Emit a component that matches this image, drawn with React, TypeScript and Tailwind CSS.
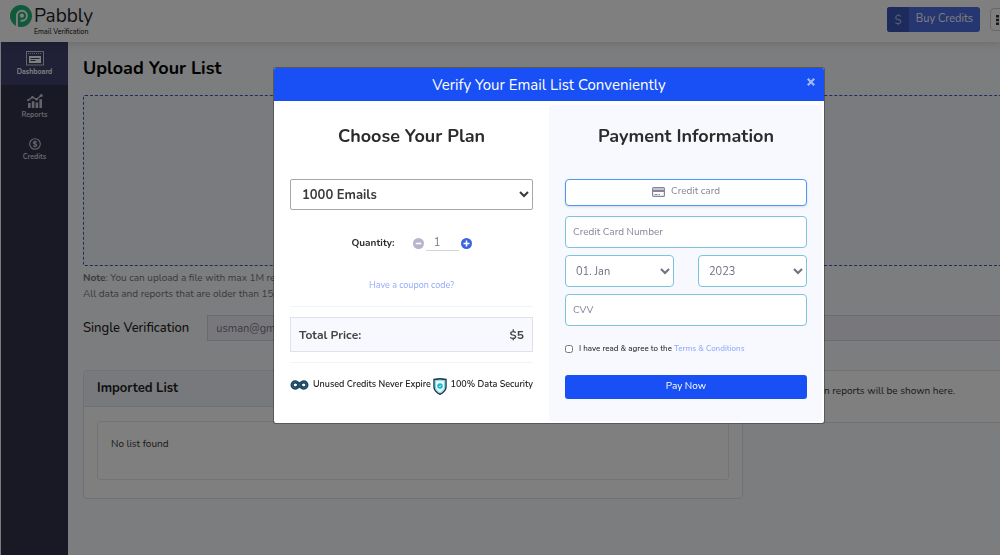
import { ReactNode, useState } from "react";

function PabblyMark() {
  return (
    <svg viewBox="0 0 22 22" className="size-[22px] shrink-0" aria-hidden="true">
      <circle cx="11" cy="11" r="11" fill="#20b276" />
      <path d="M6.900 22V10.700a5 5 0 1 1 5 5h-1.300" fill="none" stroke="#fff" strokeWidth="1.900" />
      <circle cx="11.900" cy="10.700" r="2.100" fill="#fff" />
    </svg>
  );
}

function DashboardIcon() {
  return (
    <svg viewBox="0 0 18 15" className="h-[15px] w-[18px]" fill="none" stroke="currentColor" aria-hidden="true">
      <rect x="0.5" y="0.5" width="17" height="13.5" strokeWidth="1" opacity="0.7" />
      <path d="M2 2.5h14" strokeDasharray="1 1" opacity="0.7" />
      <rect x="3" y="5" width="12" height="7" fill="currentColor" stroke="none" />
      <path d="M4.500 7.500h9M4.500 9.500h5" stroke="#40406e" strokeWidth="1" />
    </svg>
  );
}

function ReportsIcon() {
  return (
    <svg viewBox="0 0 16 14" className="h-[14px] w-[16px]" fill="currentColor" aria-hidden="true">
      <path d="M1 9h2.600v5H1zM4.800 7.200h2.600V14H4.800zM8.600 8.400h2.600V14H8.600zM12.400 5.200H15V14h-2.600z" />
      <path d="M1 6.400 5.400 3.200l4.200 2.200L14 1.600" fill="none" stroke="currentColor" strokeWidth="1.300" />
      <circle cx="1.300" cy="6.200" r="1.100" />
      <circle cx="5.400" cy="3.200" r="1.300" />
      <circle cx="9.600" cy="5.200" r="1.300" />
      <circle cx="14.200" cy="1.600" r="1.500" />
    </svg>
  );
}

function CreditsIcon() {
  return (
    <svg viewBox="0 0 12 12" className="size-3" fill="none" stroke="currentColor" strokeWidth="1.1" aria-hidden="true">
      <circle cx="6" cy="6" r="5.3" />
      <path d="M7.7 4.4C7.4 3.8 6.8 3.6 6 3.6c-1 0-1.700.4-1.700 1.100C4.300 6.300 7.800 5.500 7.800 7.200c0 .8-.8 1.200-1.800 1.200-.9 0-1.600-.3-1.900-1M6 2.500v7" />
    </svg>
  );
}

function InfinityIcon() {
  return (
    <svg viewBox="0 0 19 10" className="h-[10px] w-[19px] shrink-0" fill="none" aria-hidden="true">
      <path
        d="M9.500 5C8 3 7 1.900 5.200 1.900a3.100 3.100 0 0 0 0 6.200C7 8.100 8 7 9.500 5s2.500-3.100 4.300-3.100a3.100 3.100 0 0 1 0 6.200C12 8.100 11 7 9.500 5Z"
        stroke="#1b3a55"
        strokeWidth="3.200"
      />
      <path
        d="M9.500 5C8 3 7 1.900 5.200 1.900a3.100 3.100 0 0 0 0 6.200C7 8.100 8 7 9.500 5s2.500-3.100 4.300-3.100a3.100 3.100 0 0 1 0 6.200C12 8.100 11 7 9.500 5Z"
        stroke="#1c7286"
        strokeWidth="1"
      />
    </svg>
  );
}

function ShieldIcon() {
  return (
    <svg viewBox="0 0 14 17" className="h-[17px] w-[14px] shrink-0" fill="none" aria-hidden="true">
      <path d="M1 1.400C5 .7 9 .7 13 1.400V9c0 3.800-3 5.800-6 7.300C4 14.800 1 12.800 1 9Z" fill="#e9fbfd" stroke="#2b3b56" strokeWidth="1.500" />
      <path d="M2.400 2.700c3-.5 6.200-.5 9.200 0V9c0 2.900-2.300 4.500-4.600 5.700C4.700 13.500 2.400 11.900 2.400 9Z" stroke="#5edbe6" strokeWidth="1" />
      <circle cx="7" cy="8" r="2.800" fill="#20b8c8" />
      <path d="m5.700 8 1 1 1.700-1.900" stroke="#c9f5f8" strokeWidth="0.800" />
    </svg>
  );
}

function CardIcon() {
  return (
    <svg viewBox="0 0 13 10" className="h-[10px] w-[13px] shrink-0" aria-hidden="true">
      <rect x="0.600" y="0.600" width="11.800" height="8.800" rx="1" fill="#fff" stroke="#85859a" strokeWidth="1.200" />
      <path d="M1 1h11v2H1z" fill="#c4c4d0" />
      <path d="M.6 3h11.800v2H.6z" fill="#85859a" />
      <path d="M2.500 7.500h3M6.500 7.500h1.500" stroke="#85859a" strokeWidth="1" />
    </svg>
  );
}

function NavItem({ icon, label, active }: { icon: ReactNode; label: string; active?: boolean }) {
  return (
    <a
      href="#"
      className={
        active
          ? "flex h-[43px] flex-col items-center justify-center gap-[2px] bg-[#40406e] text-[7px] leading-2 font-bold text-white"
          : "flex h-[43px] flex-col items-center justify-center gap-[3px] text-[7px] leading-2 font-bold text-[#c8c8d4]"
      }
    >
      {icon}
      {label}
    </a>
  );
}

const fieldClass =
  "h-8 w-full rounded-[4px] border border-[#7cc4de] bg-white text-[#6f7080] placeholder:text-[#85859a]";

function PlanColumn() {
  const [quantity, setQuantity] = useState(1);
  return (
    <section className="flex flex-col px-4 pt-[23px]">
      <h3 className="text-center text-[18px] leading-6 font-bold text-[#2b2b2b]">Choose Your Plan</h3>
      <select
        aria-label="Plan"
        className="mt-[31px] h-[31px] w-full rounded-[2px] border border-[#aaa5aa] bg-white px-[7px] text-[13px] font-bold text-[#3a3a3a]"
      >
        <option>1000 Emails</option>
        <option>5000 Emails</option>
      </select>
      <div className="mt-[25px] flex h-4 items-center justify-center">
        <label htmlFor="quantity" className="mr-[18px] text-[10px] font-bold text-[#2b2b2b]">
          Quantity:
        </label>
        <button type="button" aria-label="Decrease quantity" onClick={() => setQuantity(Math.max(1, quantity - 1))}>
          <svg viewBox="0 0 11 11" className="size-[11px]" aria-hidden="true">
            <circle cx="5.500" cy="5.500" r="5.500" fill="#b5b5cb" />
            <path d="M2.700 5.500h5.600" stroke="#fff" strokeWidth="1.600" />
          </svg>
        </button>
        <input
          id="quantity"
          value={quantity}
          onChange={(event) => setQuantity(Number(event.target.value) || 1)}
          className="mx-[2px] h-4 w-[33px] border-b border-[#d5d5d5] pt-[2px] pr-[10px] text-center text-[11px] text-[#777788]"
        />
        <button type="button" aria-label="Increase quantity" onClick={() => setQuantity(quantity + 1)}>
          <svg viewBox="0 0 11 11" className="size-[11px]" aria-hidden="true">
            <circle cx="5.500" cy="5.500" r="5.500" fill="#3d64e0" />
            <path d="M2.500 5.500h6M5.500 2.500v6" stroke="#fff" strokeWidth="1.600" />
          </svg>
        </button>
      </div>
      <a href="#" className="mt-7 self-center text-[9px] leading-3 text-[#8fa9fb]">
        Have a coupon code?
      </a>
      <hr className="mt-[15px] border-[#eef5fb]" />
      <div className="mt-[10px] flex h-[35px] items-center justify-between border border-[#dfe2ec] bg-[#f8f9fe] px-2 text-[12px] font-bold text-[#444]">
        <span>Total Price:</span>
        <span>${quantity * 5}</span>
      </div>
      <hr className="mt-[10px] border-[#eef5fb]" />
      <div className="mt-[15px] flex items-start justify-between text-[9px] leading-3 font-semibold whitespace-nowrap text-[#222]">
        <span className="flex items-start gap-1">
          <span className="pt-[2px]">
            <InfinityIcon />
          </span>
          Unused Credits Never Expire
        </span>
        <span className="flex items-start gap-1">
          <ShieldIcon />
          100% Data Security
        </span>
      </div>
    </section>
  );
}

function PaymentColumn() {
  return (
    <form className="mt-1 mr-[2px] mb-[2px] flex flex-col bg-[#f8f9fe] pt-[19px] pr-[15px] pb-[22px] pl-4" onSubmit={(event) => event.preventDefault()}>
      <h3 className="text-center text-[18px] leading-6 font-bold text-[#2b2b2b]">Payment Information</h3>
      <button
        type="button"
        className="mt-[31px] flex h-[27px] items-center justify-center gap-[6px] rounded-[4px] border border-[#4a9af5] bg-white pb-[2px] text-[10px] text-[#85859a] shadow-sm"
      >
        <CardIcon />
        Credit card
      </button>
      <div className="mt-[10px] flex flex-col gap-[7px] text-[10px]">
        <input aria-label="Credit Card Number" placeholder="Credit Card Number" className={`${fieldClass} px-[7px]`} />
        <div className="grid grid-cols-2 gap-6 text-[11px]">
          <select aria-label="Expiry month" className={`${fieldClass} px-[6px]`} defaultValue="01. Jan">
            <option>01. Jan</option>
            <option>02. Feb</option>
          </select>
          <select aria-label="Expiry year" className={`${fieldClass} px-[6px]`} defaultValue="2023">
            <option>2023</option>
            <option>2024</option>
          </select>
        </div>
        <input aria-label="CVV" placeholder="CVV" className={`${fieldClass} px-[7px]`} />
      </div>
      <div className="mt-[17px] flex h-3 items-center gap-[6px] text-[8px] leading-3 font-medium text-[#2b2b2b]">
        <input id="agree" type="checkbox" className="size-2" />
        <span>
          <label htmlFor="agree">I have read &amp; agree to the </label>
          <a href="#" className="text-[#8fa9fb]">
            Terms &amp; Conditions
          </a>
        </span>
      </div>
      <button type="submit" className="mt-5 h-6 rounded-[3px] bg-[#1850f5] pb-[2px] text-[10px] text-white">
        Pay Now
      </button>
    </form>
  );
}

export default function App() {
  return (
    <div className="flex min-h-screen flex-col overflow-hidden bg-[#f9fafc] font-['Nunito','Lato',sans-serif] text-[10px] text-[#333]">
      <header className="relative flex h-[42px] shrink-0 items-start justify-between bg-white pl-[10px] shadow-[0_2px_8px_rgba(0,0,0,0.12)]">
        <a href="#" className="flex pt-[5px]" aria-label="Pabbly Email Verification">
          <PabblyMark />
          <span className="flex flex-col pl-[2px]">
            <span className="text-[19px] leading-[22px] text-[#222]">Pabbly</span>
            <span className="text-[7px] leading-[9px] text-black">Email Verification</span>
          </span>
        </a>
        <div className="flex items-center gap-[10px] pt-[7px]">
          <button type="button" className="flex h-[25px] w-[93px] items-center overflow-hidden rounded-[3px] bg-[#4a6ce0] text-[11px] text-white">
            <span className="flex h-full w-[22px] items-center justify-center bg-[#3a56b8] text-[12px] text-[#b4c0ec]">$</span>
            <span className="flex-1 text-center">Buy Credits</span>
          </button>
          <button type="button" aria-label="Apps" className="-mr-[13px] flex h-[23px] w-[23px] items-center rounded-[4px] border border-[#d0d0d0] pl-[5px]">
            <svg viewBox="0 0 11 10" className="h-[10px] w-[11px]" fill="#333" aria-hidden="true">
              <path d="M0 0h3v2.600H0zM4 0h3v2.600H4zM8 0h3v2.600H8zM0 3.700h3v2.600H0zM4 3.700h3v2.600H4zM8 3.700h3v2.600H8zM0 7.400h3V10H0zM4 7.400h3V10H4zM8 7.400h3V10H8z" />
            </svg>
          </button>
        </div>
      </header>

      <div className="flex flex-1">
        <nav className="w-[68px] shrink-0 border-l border-[#f9fafc] bg-[#33324a]">
          <NavItem icon={<DashboardIcon />} label="Dashboard" active />
          <NavItem icon={<ReportsIcon />} label="Reports" />
          <NavItem icon={<CreditsIcon />} label="Credits" />
        </nav>

        <main className="min-w-0 flex-1 pt-[14px] pl-[15px]">
          <h1 className="text-[18px] leading-6 font-bold text-black">Upload Your List</h1>
          <div className="mt-[15px] h-[171px] rounded-l-[2px] border border-r-0 border-dashed border-[#3f58c8] bg-[#f5f6fc]" />
          <div className="mt-1 leading-4 text-[#777]">
            <p>
              <strong>Note</strong>: You can upload a file with max 1M records.
            </p>
            <p>All data and reports that are older than 15 days are removed.</p>
          </div>
          <div className="mt-[13px] flex items-center gap-[18px]">
            <label htmlFor="single" className="text-[13px] leading-6 font-medium text-[#222]">
              Single Verification
            </label>
            <input
              id="single"
              defaultValue="usman@gmail.com"
              className="h-[26px] flex-1 border border-r-0 border-[#d4d6e0] bg-[#f0f1f8] px-2 text-[11px] text-[#777788]"
            />
          </div>
          <div className="mt-[29px] grid grid-cols-[8fr_3fr] items-start gap-[10px]">
            <section className="rounded-[4px] border border-[#dfe2ea] bg-white">
              <h2 className="flex h-9 items-center border-b border-[#dfe2ea] bg-[#f1f3fa] px-[13px] text-[13px] font-bold text-[#222]">
                Imported List
              </h2>
              <div className="px-[13px] pt-[14px] pb-[18px]">
                <p className="h-[59px] rounded-[3px] border border-[#e6e6ea] px-[13px] pt-[14px] leading-4">No list found</p>
              </div>
            </section>
            <section className="border border-r-0 border-[#e3e5ec] bg-white">
              <p className="h-[51px] pt-3 pr-[45px] text-right leading-4 whitespace-nowrap">Verification reports will be shown here.</p>
            </section>
          </div>
        </main>
      </div>

      <div className="fixed inset-0 flex items-start justify-center bg-black/50 pt-[67px] pl-[98px]">
        <div role="dialog" aria-labelledby="modal-title" className="w-[552px] rounded-[3px] border border-black/30 bg-white bg-clip-padding">
          <header className="relative flex h-[33px] items-center justify-center rounded-t-[2px] bg-[#1850f5]">
            <h2 id="modal-title" className="text-[15px] leading-5 text-white">
              Verify Your Email List Conveniently
            </h2>
            <button type="button" aria-label="Close" className="absolute top-[10px] right-[9px] text-[#a3b9fb]">
              <svg viewBox="0 0 8 8" className="size-2" stroke="currentColor" strokeWidth="2.200" aria-hidden="true">
                <path d="m.8.8 6.400 6.400M7.200.8.8 7.200" />
              </svg>
            </button>
          </header>
          <div className="grid grid-cols-2">
            <PlanColumn />
            <PaymentColumn />
          </div>
        </div>
      </div>
    </div>
  );
}
